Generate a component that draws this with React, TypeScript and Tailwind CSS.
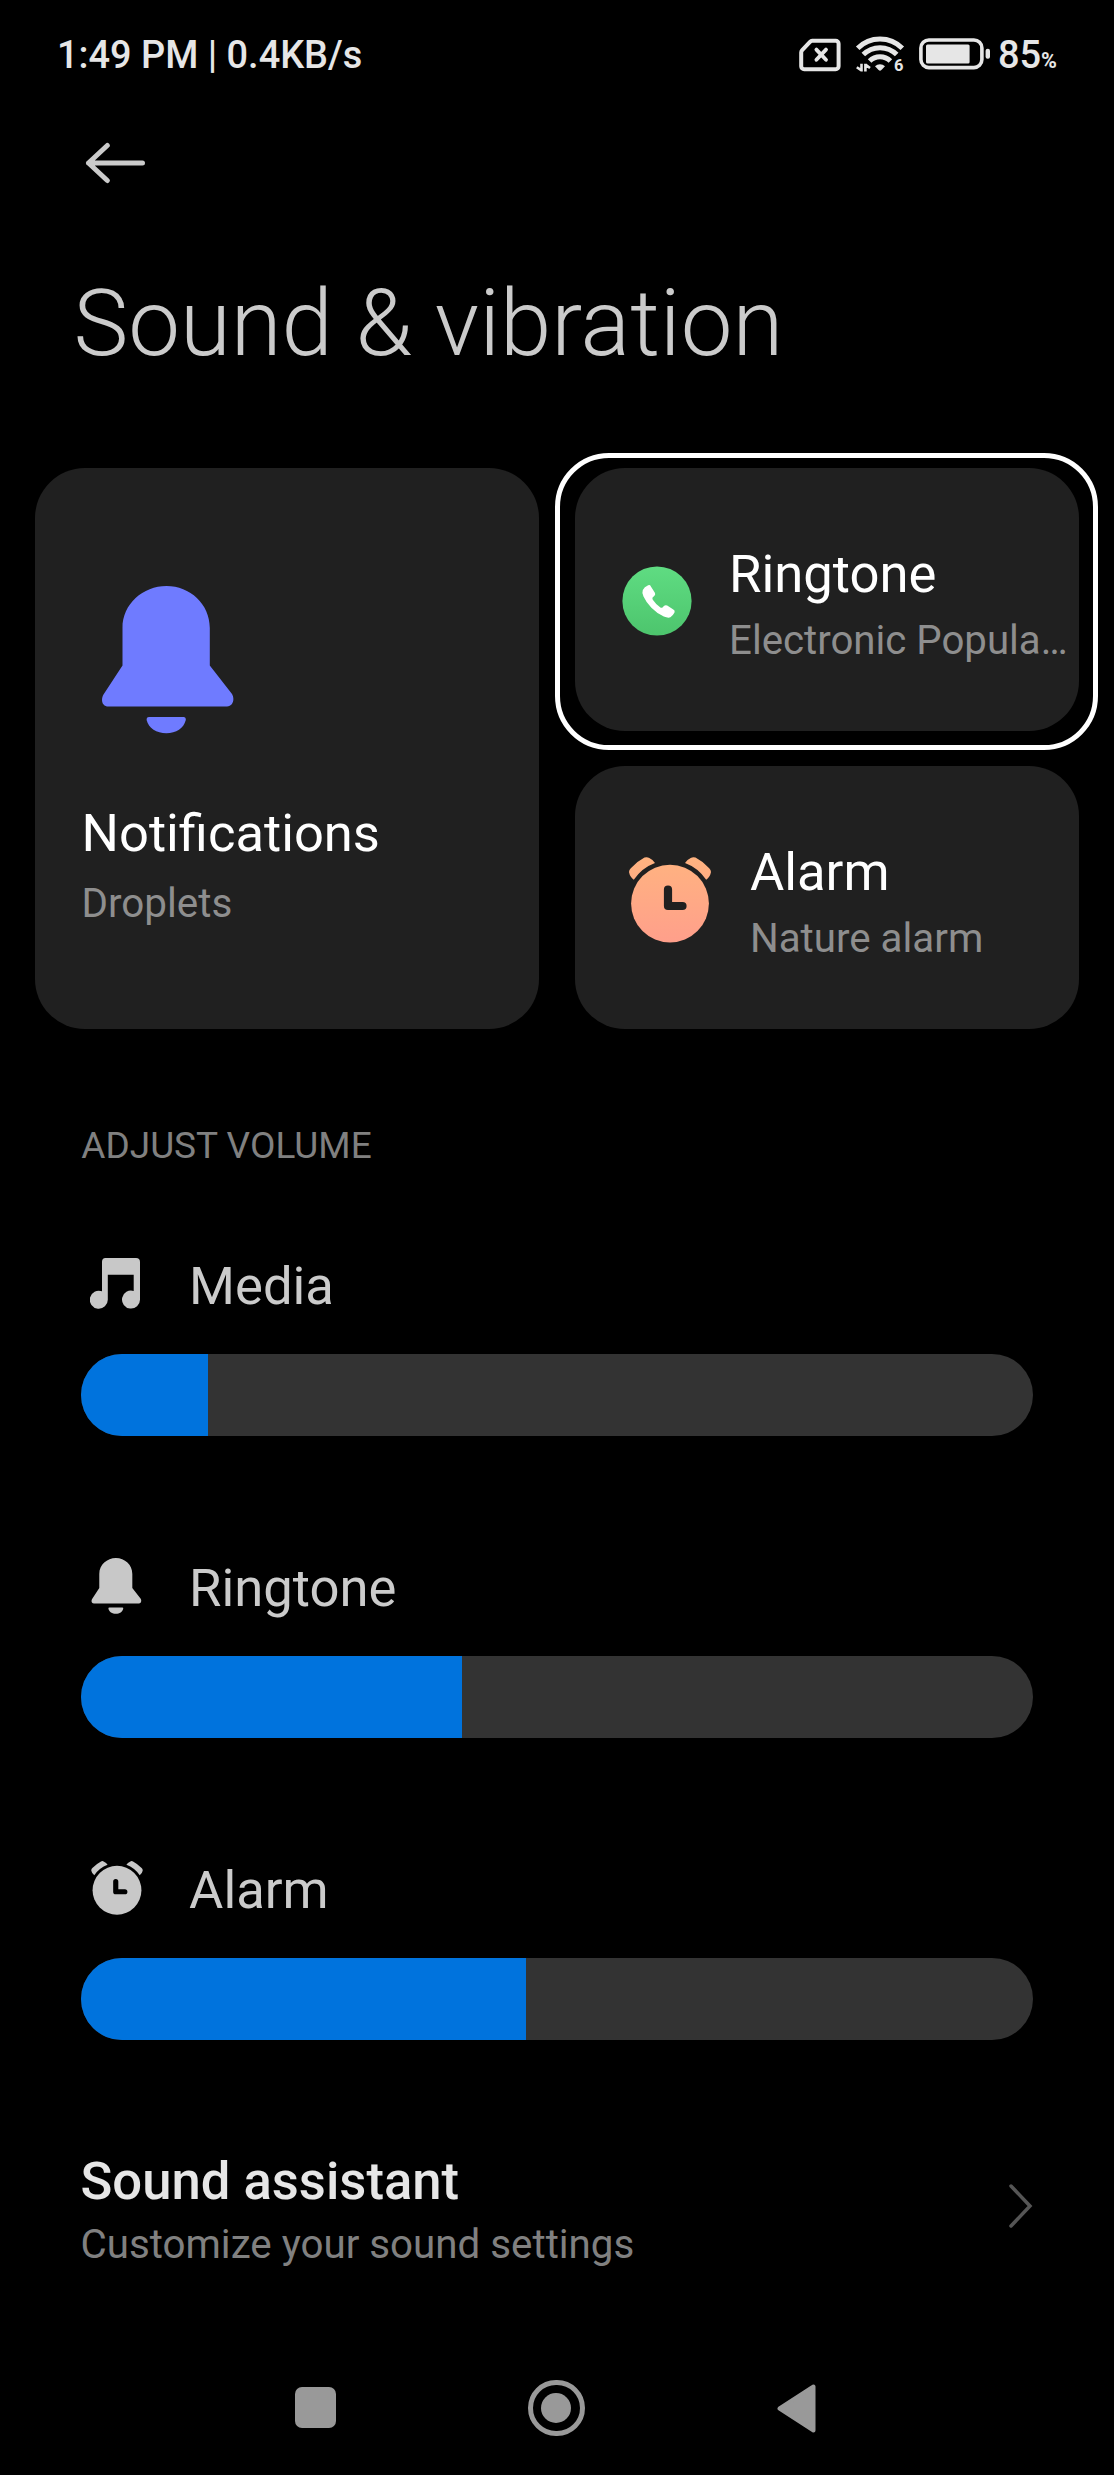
import type { ReactNode } from "react";

function SimIcon() {
  return (
    <svg className="h-[34px] w-[42px]" viewBox="0 0 42 34" fill="none" stroke="#e6e6e6" strokeLinejoin="round" strokeLinecap="round">
      <path d="M13.2 2.8H36.6A3 3 0 0 1 39.6 5.8V28.2A3 3 0 0 1 36.6 31.2H5.2A3 3 0 0 1 2.2 28.2V14.6A3.6 3.6 0 0 1 3.2 12.1L11 3.8A3.4 3.4 0 0 1 13.2 2.8Z" strokeWidth="4" />
      <path d="M17.4 11.6L27 21.8M27 11.6L17.4 21.8" strokeWidth="3.8" />
    </svg>
  );
}

function WifiIcon() {
  return (
    <svg className="h-[40px] w-[50px] overflow-visible" viewBox="0 0 50 40" fill="none">
      <g stroke="#e6e6e6" strokeWidth="5">
        <path d="M1.7 12.2A31.5 31.5 0 0 1 46.3 12.2" />
        <path d="M7.3 18.6A23.5 23.5 0 0 1 40.7 18.6" />
        <path d="M13.6 25A14.6 14.6 0 0 1 34.4 25" />
      </g>
      <path d="M19 30.2A7.4 7.4 0 0 1 29 30.2L25.4 34A2 2 0 0 1 22.6 34Z" fill="#e6e6e6" />
      <path d="M5.500 27.8V35.4M5.500 34.4L.8 31.2M9.400 35.4V27.8M9.400 28.600L14 32" stroke="#e6e6e6" strokeWidth="2.6" />
      <text x="38" y="35" fill="#e6e6e6" fontFamily="Roboto" fontWeight="700" fontSize="16.5">6</text>
    </svg>
  );
}

function BatteryIcon() {
  return (
    <svg className="h-[32px] w-[72px]" viewBox="0 0 72 32" fill="none">
      <rect x="1.9" y="2" width="61" height="27.6" rx="8" stroke="#e6e6e6" strokeWidth="3.6" />
      <rect x="7" y="6.4" width="43.6" height="19" rx="1.5" fill="#e6e6e6" />
      <rect x="66.6" y="10.7" width="4.4" height="10" rx="2" fill="#e6e6e6" />
    </svg>
  );
}

function BellIcon({ className }: { className: string }) {
  return (
    <svg className={className} viewBox="0 0 132 148" fill="currentColor">
      <path d="M64.500 0C88 0 107.800 18 107.800 42V79.500L130 108C133 113 131 120.500 125 120.500H6.500C0 120.500 -1.500 114 1.500 108.500L20.500 79.500V42C20.500 18 41 0 64.500 0Z" />
      <path d="M47 131H81.500Q84 131 83.800 134C82 142 74 147.300 64.300 147.300C54.600 147.300 46.400 142 44.600 134Q44.400 131 47 131Z" />
    </svg>
  );
}

function AlarmIcon({ className, hands, gradient }: { className: string; hands: string; gradient?: boolean }) {
  const fill = gradient ? "url(#alarm-fill)" : "currentColor";
  return (
    <svg className={className} viewBox="0 0 82 86" fill="none">
      <defs>
        <linearGradient id="alarm-fill" x1="0" y1="0" x2="0" y2="86" gradientUnits="userSpaceOnUse">
          <stop offset="0" stopColor="#ffb380" />
          <stop offset="1" stopColor="#ff9f8b" />
        </linearGradient>
      </defs>
      <g fill={fill}>
        <circle cx="41" cy="46.600" r="38.900" />
        <path d="M4.800 22.700Q1 20 .1 15.500Q-.2 13 1.800 11.200Q8 4.500 15.500 .6Q18 -.4 20.300 1Q24 2.700 26 6Q13 10.800 4.800 22.700Z" />
        <path d="M77.200 22.700Q81 20 81.900 15.500Q82.200 13 80.200 11.200Q74 4.500 66.500 .6Q64 -.4 61.700 1Q58 2.700 56 6Q69 10.800 77.200 22.700Z" />
      </g>
      <path d="M39 32.600V49H53.500" stroke={hands} strokeWidth="8.200" strokeLinecap="round" strokeLinejoin="round" />
    </svg>
  );
}

function PhoneBadge() {
  return (
    <svg className="size-[70px]" viewBox="0 0 70 70">
      <defs>
        <linearGradient id="phone-fill" x1="0" y1="0" x2="0" y2="1">
          <stop offset="0" stopColor="#5fdc82" />
          <stop offset="1" stopColor="#4dc56d" />
        </linearGradient>
      </defs>
      <circle cx="35" cy="35" r="34.600" fill="url(#phone-fill)" />
      <path
        d="M26.200 19.200Q28 18.400 28.900 20.400L33 27Q33.700 28.800 32.200 30L30.600 31.600Q30.100 32.600 30.800 33.800Q33.800 38.400 38.400 41.500Q39.600 42.100 40.500 41.400L42.200 39.800Q43.500 38.600 45.200 39.600L51.300 43.600Q53.400 44.800 52.500 46.600Q50.800 50 48.400 51.300Q46 52.300 41.800 50.500Q35 47.400 29.400 41.700Q24.300 36.500 21.500 30.400Q19.700 26.400 20.800 24Q22.200 20.800 26.200 19.200Z"
        fill="#fff"
      />
    </svg>
  );
}

function MusicIcon() {
  return (
    <svg className="h-[51px] w-[50px]" viewBox="0 0 50 51" fill="#c8c8c8">
      <path d="M15.500 0H46Q50 0 50 4V41.500A9 9 0 1 1 43.700 33V16.800H17.800V41.500A9 9 0 1 1 12 33.300V4Q12 0 15.500 0Z" />
    </svg>
  );
}

function VolumeRow({ icon, label, fill }: { icon: ReactNode; label: string; fill: number }) {
  return (
    <div className="h-[302.2px]">
      <div className="flex h-[110px] items-start">
        <div className="flex w-[107.800px] shrink-0 justify-start pl-[8.700px] pt-[10px]">{icon}</div>
        <div className="pt-[12px] text-[52.6px] leading-[60px] text-[#cbcbcb]">{label}</div>
      </div>
      <div className="h-[81.7px] w-[951.300px] overflow-hidden rounded-full bg-[#333333]">
        <div className="h-full bg-[#0073dd]" style={{ width: fill }} />
      </div>
    </div>
  );
}

export default function App() {
  return (
    <div className="flex h-[2475px] w-[1114px] flex-col overflow-hidden bg-black font-['Roboto',sans-serif]">
      <header className="flex h-[110px] shrink-0 items-start pl-[57px]">
        <div className="whitespace-nowrap pt-[33px] text-[37.9px] font-medium leading-[44px] text-[#e6e6e6]">1:49 PM | 0.4KB/s</div>
        <div className="ml-auto flex items-start pr-[57px] text-[#e6e6e6]">
          <div className="mt-[38px]"><SimIcon /></div>
          <div className="ml-[15px] mt-[36px]"><WifiIcon /></div>
          <div className="ml-[13px] mt-[38px]"><BatteryIcon /></div>
          <div className="ml-[7px] flex items-baseline pt-[33px] leading-[44px]">
            <span className="text-[38px] font-medium">85</span>
            <span className="text-[21.500px] font-bold">%</span>
          </div>
        </div>
      </header>

      <nav className="h-[160px] shrink-0 pl-[85px] pt-[32px]">
        <svg className="h-[42px] w-[61px]" viewBox="0 0 61 42" fill="none" stroke="#cbcbcb" strokeWidth="5" strokeLinecap="round" strokeLinejoin="round">
          <path d="M22.300 3.500L3.500 21L22.300 38.500M3.500 21H57.500" />
        </svg>
      </nav>

      <h1 className="h-[198px] shrink-0 pl-[73.500px] text-[92.4px] font-light leading-[108px] text-[#cbcbcb]">Sound &amp; vibration</h1>

      <main className="h-[1911.500px] shrink-0">
        <section className="flex gap-[35.300px] pl-[35px]">
          <div className="h-[561px] w-[504.300px] rounded-[50px] bg-[#202020] pl-[46.500px] pt-[118px]">
            <BellIcon className="ml-[20.500px] h-[148px] w-[132px] text-[#6f7bff]" />
            <div className="mt-[69px] text-[52.5px] leading-[60px] text-white">Notifications</div>
            <div className="mt-[17px] text-[40.4px] leading-[48px] text-[#8e8e8e]">Droplets</div>
          </div>
          <div className="flex flex-col gap-[35px]">
            <div className="relative flex h-[263px] w-[504px] rounded-[50px] bg-[#202020]">
              <div className="pointer-events-none absolute -bottom-[19px] -left-[20px] -right-[19px] -top-[15px] rounded-[54px] border-[5px] border-white" />
              <div className="w-[154.500px] shrink-0 pl-[47px] pt-[97.500px]"><PhoneBadge /></div>
              <div className="min-w-0 pt-[76px]">
                <div className="text-[52.6px] leading-[60px] text-white">Ringtone</div>
                <div className="mt-[13px] whitespace-nowrap text-[40.2px] leading-[48px] text-[#8e8e8e]">Electronic Popula…</div>
              </div>
            </div>
            <div className="flex h-[263px] w-[504px] rounded-[50px] bg-[#202020]">
              <div className="w-[175.300px] shrink-0 pl-[54px] pt-[90.500px]">
                <AlarmIcon className="h-[86px] w-[82px]" hands="#202020" gradient />
              </div>
              <div className="pt-[76px]">
                <div className="text-[52.6px] leading-[60px] text-white">Alarm</div>
                <div className="mt-[13px] text-[40.3px] leading-[48px] text-[#8e8e8e]">Nature alarm</div>
              </div>
            </div>
          </div>
        </section>

        <section className="pl-[81.300px]">
          <h2 className="h-[215px] pt-[95px] text-[37px] leading-[44px] text-[#808080]">ADJUST VOLUME</h2>
          <VolumeRow label="Media" fill={127} icon={<div className="mt-[4px]"><MusicIcon /></div>} />
          <VolumeRow label="Ringtone" fill={380.5} icon={<BellIcon className="ml-[1.500px] mt-[2px] h-[56px] w-[51px] text-[#c8c8c8]" />} />
          <VolumeRow label="Alarm" fill={444.5} icon={<AlarmIcon className="ml-[1.500px] mt-[3px] h-[54px] w-[52px] text-[#c8c8c8]" hands="#000" />} />
        </section>

        <section className="flex h-[190px] pl-[80.500px] pr-[81.500px]">
          <div>
            <div className="text-[52.6px] font-medium leading-[60px] text-[#e6e6e6]">Sound assistant</div>
            <div className="mt-[10px] text-[40.300px] leading-[48px] text-[#808080]">Customize your sound settings</div>
          </div>
          <svg className="ml-auto mt-[33.500px] h-[44px] w-[24px]" viewBox="0 0 24 44" fill="none" stroke="#555" strokeWidth="3.500" strokeLinecap="round">
            <path d="M2 2L21 22L2 42" />
          </svg>
        </section>
      </main>

      <footer className="flex items-start justify-between pl-[295px] pr-[298.500px]">
        <div className="mt-[7px] size-[41px] rounded-[7px] bg-[#999999]" />
        <div className="flex size-[56.500px] items-center justify-center rounded-full border-[5px] border-[#999999]">
          <div className="size-[30px] rounded-full bg-[#999999]" />
        </div>
        <svg className="mt-[4px] h-[49px] w-[39px]" viewBox="0 0 39 49" fill="#999999" stroke="#999999" strokeWidth="4" strokeLinejoin="round">
          <path d="M36.500 2.500V46.500L2.500 24.500Z" />
        </svg>
      </footer>
    </div>
  );
}
